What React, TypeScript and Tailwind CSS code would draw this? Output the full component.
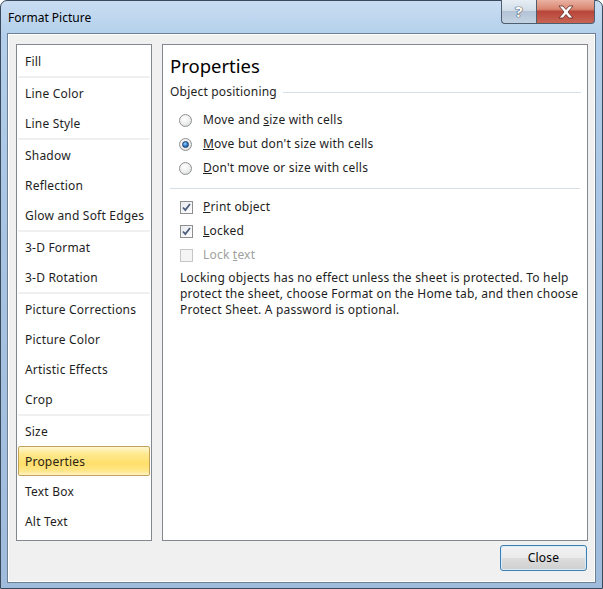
import React from 'react';

const categories: { label: string }[][] = [
  [{ label: 'Fill' }],
  [{ label: 'Line Color' }, { label: 'Line Style' }],
  [{ label: 'Shadow' }, { label: 'Reflection' }, { label: 'Glow and Soft Edges' }],
  [{ label: '3-D Format' }, { label: '3-D Rotation' }],
  [{ label: 'Picture Corrections' }, { label: 'Picture Color' }, { label: 'Artistic Effects' }, { label: 'Crop' }],
  [{ label: 'Size' }, { label: 'Properties' }, { label: 'Text Box' }, { label: 'Alt Text' }],
];

const Radio = ({ checked }: { checked?: boolean }) => (
  <span className="relative w-[13px] h-[13px] rounded-full border border-[#8d9092] bg-[radial-gradient(circle_at_40%_35%,#ffffff_0%,#f0f0f0_45%,#d4d6d8_100%)] flex items-center justify-center shrink-0">
    {checked && (
      <span className="w-[7px] h-[7px] rounded-full bg-[radial-gradient(circle_at_40%_35%,#9fd3ff_0%,#2f7fd0_50%,#0f3f7c_100%)] border border-[#1b3f66]" />
    )}
  </span>
);

const Checkbox = ({ checked, disabled }: { checked?: boolean; disabled?: boolean }) => (
  <span
    className={
      disabled
        ? 'w-[13px] h-[13px] border border-[#c6c6c6] bg-[#f4f4f4] shrink-0'
        : 'w-[13px] h-[13px] border border-[#8f8f8f] bg-[linear-gradient(135deg,#e6e9ee_0%,#f6f7f9_60%,#ffffff_100%)] flex items-center justify-center shrink-0'
    }
  >
    {checked && (
      <svg width="11" height="11" viewBox="0 0 11 11">
        <path d="M2 5.5 L4.3 8 L9 2" fill="none" stroke="#4a5d7c" strokeWidth="1.8" />
      </svg>
    )}
  </span>
);

const App = () => {
  return (
    <div className="w-[603px] h-[589px] font-['Segoe_UI','Noto_Sans',sans-serif] text-[12px] tracking-[0.2px] text-[#1e1e1e]">
      {/* window frame */}
      <div className="w-full h-full rounded-t-[7px] border border-[#3b4a5a] bg-[linear-gradient(180deg,#c9ddf2_0%,#b3cfeb_6%,#a7c4e3_40%,#9fbcdc_100%)] flex flex-col px-[6px] pb-[5px]">
        {/* title bar */}
        <div className="h-[32px] flex items-start justify-between shrink-0">
          <div className="pl-[1px] pt-[9px] text-[12px] tracking-normal text-black leading-[16px]">Format Picture</div>
          <div className="flex -mt-px mr-[1px]">
            <div className="w-[35px] h-[24px] rounded-bl-[4px] border border-t-0 border-r-0 border-[#4d5e70] bg-[linear-gradient(180deg,#e6edf4_0%,#d3dee9_45%,#b4c4d6_50%,#c3d3e4_100%)] flex items-center justify-center">
              <span className="text-white font-bold text-[15px] leading-none [text-shadow:0_0_1px_#3a4a5a,0_0_1px_#3a4a5a,0_0_1px_#3a4a5a]">?</span>
            </div>
            <div className="w-[59px] h-[24px] rounded-br-[4px] border border-t-0 border-[#4d5e70] bg-[linear-gradient(180deg,#eab2a3_0%,#d98570_40%,#b8453a_50%,#c86555_100%)] flex items-center justify-center">
              <svg width="18" height="14" viewBox="0 0 18 14">
                <path
                  d="M2 1 H6 L9 4.5 L12 1 H16 L11 7 L16 13 H12 L9 9.5 L6 13 H2 L7 7 Z"
                  fill="#ffffff"
                  stroke="#5a2a24"
                  strokeWidth="0.8"
                />
              </svg>
            </div>
          </div>
        </div>

        {/* client area */}
        <div className="flex-1 border border-[#6d7f93] bg-[#f0f0f0] shadow-[inset_0_0_0_1px_#ffffff] flex flex-col pt-[10px] pl-[8px] pr-[7px]">
          <div className="flex gap-[10px] h-[497px]">
            {/* category list */}
            <div className="w-[136px] border border-[#828790] bg-white p-px flex flex-col">
              {categories.map((group, gi) => (
                <React.Fragment key={gi}>
                  {gi > 0 && <div className="h-[2px] bg-[#f0f0f0]" />}
                  {group.map((item) =>
                    item.label === 'Properties' ? (
                      <div
                        key={item.label}
                        className="h-[30px] flex items-center pt-px pl-[6px] rounded-[2px] border border-[#c4a25d] bg-[linear-gradient(180deg,#fff6cf_0%,#ffe98f_25%,#ffdf6a_60%,#ffe68a_85%,#fff3c0_100%)] text-[#2b2417]"
                      >
                        {item.label}
                      </div>
                    ) : (
                      <div key={item.label} className="h-[30px] flex items-center pt-px pl-[7px]">
                        {item.label}
                      </div>
                    )
                  )}
                </React.Fragment>
              ))}
            </div>

            {/* properties pane */}
            <div className="flex-1 border border-[#828790] bg-white px-[7px] flex flex-col">
              <div className="pt-[9px] text-[18.5px] tracking-normal leading-[24px] text-black">Properties</div>
              <div className="mt-[6px] h-[16px] flex items-center gap-[6px]">
                <span className="leading-[16px]">Object positioning</span>
                <span className="flex-1 h-px bg-[#d5dfe5] mr-[-1px]" />
              </div>

              <div className="mt-[8px] flex flex-col pl-[9px]">
                <div className="h-[24px] flex items-center gap-[11px]">
                  <Radio />
                  <span>
                    Move and <span className="underline">s</span>ize with cells
                  </span>
                </div>
                <div className="h-[24px] flex items-center gap-[11px]">
                  <Radio checked />
                  <span>
                    <span className="underline">M</span>ove but don't size with cells
                  </span>
                </div>
                <div className="h-[24px] flex items-center gap-[11px]">
                  <Radio />
                  <span>
                    <span className="underline">D</span>on't move or size with cells
                  </span>
                </div>
              </div>

              <div className="mt-[8px] h-px bg-[#d5dfe5]" />

              <div className="mt-[6px] flex flex-col pl-[10px]">
                <div className="h-[24px] flex items-center gap-[10px]">
                  <Checkbox checked />
                  <span>
                    <span className="underline">P</span>rint object
                  </span>
                </div>
                <div className="h-[24px] flex items-center gap-[10px]">
                  <Checkbox checked />
                  <span>
                    <span className="underline">L</span>ocked
                  </span>
                </div>
                <div className="h-[24px] flex items-center gap-[10px]">
                  <Checkbox disabled />
                  <span className="text-[#a0a0a0]">
                    Lock <span className="underline">t</span>ext
                  </span>
                </div>
              </div>

              <p className="mt-[3px] pl-[10px] leading-[16px]">
                Locking objects has no effect unless the sheet is protected. To help
                <br />
                protect the sheet, choose Format on the Home tab, and then choose
                <br />
                Protect Sheet. A password is optional.
              </p>
            </div>
          </div>

          <div className="flex justify-end mt-[4px] pr-px">
            <button className="w-[87px] h-[26px] rounded-[3px] border border-[#3c7fb1] bg-[linear-gradient(180deg,#f2f2f2_0%,#ebebeb_48%,#dddddd_50%,#cfcfcf_100%)] shadow-[inset_0_0_0_1px_#d9ecf8] text-[12px] text-black">
              Close
            </button>
          </div>
        </div>
      </div>
    </div>
  );
};

export default App;
